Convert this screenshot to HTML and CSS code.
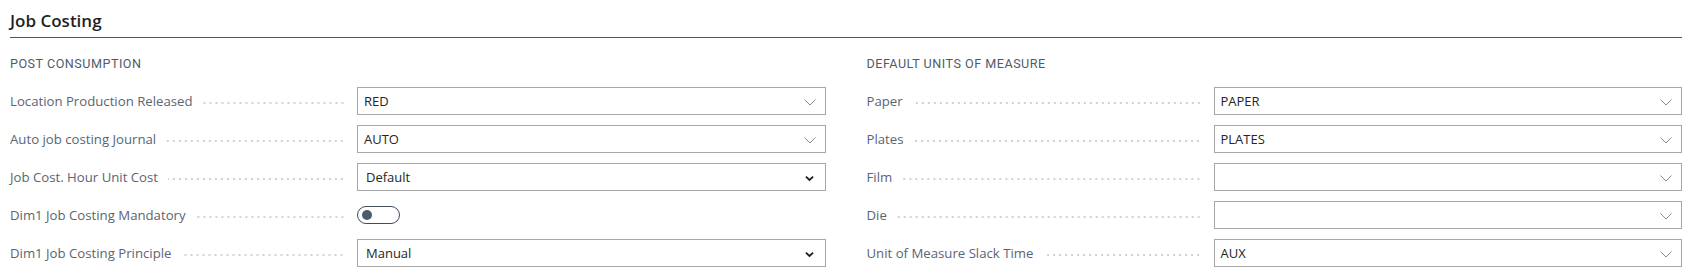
FILE: index.html
```html
<!DOCTYPE html>
<html lang="en">
<head>
  <meta charset="UTF-8" />
  <title>Job Costing</title>
  <link rel="stylesheet" href="styles.css">
</head>
<body>
  <div class="page">
    <h1 class="title">Job Costing</h1>

    <div class="columns">
      <div class="group">
        <h2>Post Consumption</h2>
        <div class="row">
          <div class="caption"><span>Location Production Released</span><i class="dots"></i></div>
          <div class="field lookup">RED<svg class="chev" viewBox="0 0 12 7"><polyline points="0.5,0.5 6,6 11.5,0.5"/></svg></div>
        </div>
        <div class="row">
          <div class="caption"><span>Auto job costing Journal</span><i class="dots"></i></div>
          <div class="field lookup">AUTO<svg class="chev" viewBox="0 0 12 7"><polyline points="0.5,0.5 6,6 11.5,0.5"/></svg></div>
        </div>
        <div class="row">
          <div class="caption"><span>Job Cost. Hour Unit Cost</span><i class="dots"></i></div>
          <div class="field option">Default<svg class="chev bold" viewBox="0 0 10 7"><polyline points="1,1.5 5,5.2 9,1.5"/></svg></div>
        </div>
        <div class="row">
          <div class="caption"><span>Dim1 Job Costing Mandatory</span><i class="dots"></i></div>
          <div class="toggle-wrap"><span class="toggle"><b></b></span></div>
        </div>
        <div class="row">
          <div class="caption"><span>Dim1 Job Costing Principle</span><i class="dots"></i></div>
          <div class="field option">Manual<svg class="chev bold" viewBox="0 0 10 7"><polyline points="1,1.5 5,5.2 9,1.5"/></svg></div>
        </div>
      </div>

      <div class="group">
        <h2>Default Units of Measure</h2>
        <div class="row">
          <div class="caption"><span>Paper</span><i class="dots"></i></div>
          <div class="field lookup">PAPER<svg class="chev" viewBox="0 0 12 7"><polyline points="0.5,0.5 6,6 11.5,0.5"/></svg></div>
        </div>
        <div class="row">
          <div class="caption"><span>Plates</span><i class="dots"></i></div>
          <div class="field lookup">PLATES<svg class="chev" viewBox="0 0 12 7"><polyline points="0.5,0.5 6,6 11.5,0.5"/></svg></div>
        </div>
        <div class="row">
          <div class="caption"><span>Film</span><i class="dots"></i></div>
          <div class="field lookup"><svg class="chev" viewBox="0 0 12 7"><polyline points="0.5,0.5 6,6 11.5,0.5"/></svg></div>
        </div>
        <div class="row">
          <div class="caption"><span>Die</span><i class="dots"></i></div>
          <div class="field lookup"><svg class="chev" viewBox="0 0 12 7"><polyline points="0.5,0.5 6,6 11.5,0.5"/></svg></div>
        </div>
        <div class="row">
          <div class="caption"><span>Unit of Measure Slack Time</span><i class="dots"></i></div>
          <div class="field lookup">AUX<svg class="chev" viewBox="0 0 12 7"><polyline points="0.5,0.5 6,6 11.5,0.5"/></svg></div>
        </div>
      </div>
    </div>
  </div>
</body>
</html>
```

FILE: styles.css
```css
body {
  margin: 0;
  background: #fff;
  font-family: "Open Sans", "Noto Sans", sans-serif;
  color: #212121;
}
.page {
  padding: 0 7px 0 10px;
}
.title {
  margin: 0;
  padding-top: 10px;
  height: 27px;
  font-size: 17px;
  font-weight: 600;
  line-height: 22px;
  color: #1f1f1f;
  border-bottom: 1px solid #4a5868;
}
.columns {
  display: grid;
  grid-template-columns: 1fr 1fr;
  column-gap: 41px;
}
.group h2 {
  margin: 0;
  padding-top: 16px;
  height: 33px;
  font-family: "Roboto", "Liberation Sans", sans-serif;
  font-size: 12.6px;
  font-weight: 400;
  line-height: 20px;
  letter-spacing: 0.5px;
  text-transform: uppercase;
  color: #4f5b6a;
}
.row {
  display: flex;
  align-items: center;
  height: 28px;
  margin-bottom: 10px;
}
.caption {
  flex: 0 0 347px;
  display: flex;
  align-items: center;
  font-size: 13.2px;
  font-weight: 400;
  color: #5a6573;
}
.caption span {
  white-space: nowrap;
}
.dots {
  flex: 1;
  height: 2px;
  margin: 3px 12px 0 10px;
  background-image: radial-gradient(circle, #d2d2d2 0.8px, transparent 1px);
  background-size: 6px 2px;
  background-repeat: repeat-x;
  background-position: right center;
}
.field {
  flex: 1;
  position: relative;
  height: 28px;
  box-sizing: border-box;
  border: 1px solid #a8a8a8;
  padding: 0 30px 0 6px;
  display: flex;
  align-items: center;
  font-size: 13px;
  color: #262626;
}
.option {
  padding-left: 8px;
}
.chev {
  position: absolute;
  right: 9px;
  top: 11px;
  width: 12px;
  height: 7px;
  fill: none;
  stroke: #8c8c8c;
  stroke-width: 1;
}
.chev.bold {
  right: 11px;
  width: 9px;
  height: 7px;
  stroke: #1f1f1f;
  stroke-width: 2;
}
.toggle-wrap {
  flex: 1;
  display: flex;
  align-items: center;
}
.toggle {
  position: relative;
  display: block;
  width: 43px;
  height: 18px;
  box-sizing: border-box;
  border: 1px solid #3e4c5e;
  border-radius: 9px;
}
.toggle b {
  position: absolute;
  left: 4px;
  top: 3px;
  width: 10px;
  height: 10px;
  border-radius: 50%;
  background: #4b5a6d;
}
```
